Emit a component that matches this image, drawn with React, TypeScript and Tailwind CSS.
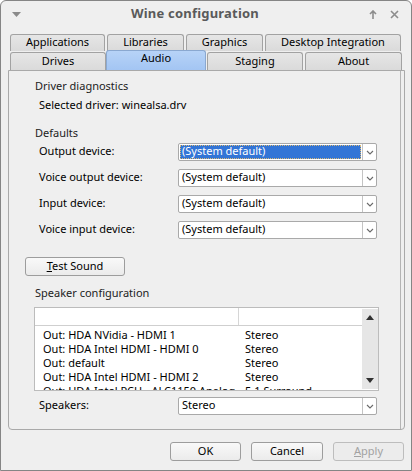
import React from 'react';

const Chevron = () => (
  <svg width="8" height="5" viewBox="0 0 8 5" fill="none">
    <path d="M1 1l3 3 3-3" stroke="#6b6b6b" strokeWidth="1.1" />
  </svg>
);

interface ComboProps {
  value: string;
  selected?: boolean;
}

const Combo: React.FC<ComboProps> = ({ value, selected }) => (
  <div className="flex w-[199px] h-[18px] bg-white border border-[#a9a9a9] rounded-[2px]">
    <div className="flex-1 p-[1px]">
      <div
        className={
          selected
            ? 'h-full flex items-center pl-[1px] pb-[1px] bg-[#3375d6] text-white border border-dotted border-[#d8b878]'
            : 'h-full flex items-center pl-[2px] pb-[1px] text-black'
        }
      >
        {value}
      </div>
    </div>
    <div className="w-[14px] flex items-center justify-center border-l border-[#c4c4c4]">
      <Chevron />
    </div>
  </div>
);

const Field: React.FC<{ label: string; value: string; selected?: boolean }> = ({ label, value, selected }) => (
  <div className="flex items-center pl-[30px] h-[18px]">
    <div className="w-[139px] pb-[1px]">{label}</div>
    <Combo value={value} selected={selected} />
  </div>
);

const Tab: React.FC<{ label: string; w: string; active?: boolean; ml?: string }> = ({ label, w, active, ml }) => (
  <div
    className={`${w} ${ml ?? ''} flex items-center justify-center border border-b-0 rounded-t-[3px] ${
      active
        ? 'h-[20px] relative z-10 bg-gradient-to-b from-[#b7d3f7] to-[#a3c5f3] border-[#8aa8d0] pb-[4px]'
        : 'h-full pb-[1px] bg-gradient-to-b from-[#e6e6e6] to-[#dadada] border-[#a2a2a2]'
    }`}
  >
    {label}
  </div>
);

const Button: React.FC<{ children: React.ReactNode; disabled?: boolean; w?: string }> = ({ children, disabled, w }) => (
  <div
    className={`${w ?? 'w-[71px]'} h-[19px] pb-[1px] flex items-center justify-center rounded-[3px] border ${
      disabled
        ? 'border-[#bdbdbd] text-[#a2a2a2] bg-[#ececec]'
        : 'border-[#9d9d9d] bg-gradient-to-b from-[#f9f9f9] to-[#ebebeb] text-black'
    }`}
  >
    {children}
  </div>
);

const rows = [
  ['Out: HDA NVidia - HDMI 1', 'Stereo'],
  ['Out: HDA Intel HDMI - HDMI 0', 'Stereo'],
  ['Out: default', 'Stereo'],
  ['Out: HDA Intel HDMI - HDMI 2', 'Stereo'],
  ['Out: HDA Intel PCH - ALC1150 Analog', '5.1 Surround'],
];

export default function App() {
  return (
    <div className="w-[412px] h-[471px] flex flex-col bg-[#efefef] border border-[#858585] rounded-t-[6px] overflow-hidden font-['Noto_Sans',sans-serif] text-[11px] text-black">
      {/* Title bar */}
      <div className="h-[26px] shrink-0 flex items-center px-[10px] relative">
        <svg width="9" height="5" viewBox="0 0 9 5" className="ml-[1px] mt-[1px]">
          <path d="M0 0h9L4.5 5z" fill="#8a8a8a" />
        </svg>
        <div className="flex-1 text-center font-bold text-[13px] text-[#5a5a5a] tracking-[0.2px]">Wine configuration</div>
        <div className="flex items-center gap-[13px] mr-[2px] text-[#8c8c8c]">
          <svg width="8" height="9" viewBox="0 0 8 9">
            <path d="M4 1v8M1 4l3-3 3 3" stroke="#8c8c8c" strokeWidth="1.6" fill="none" />
          </svg>
          <svg width="9" height="9" viewBox="0 0 9 9">
            <path d="M1 1l7 7M8 1l-7 7" stroke="#8c8c8c" strokeWidth="1.6" />
          </svg>
        </div>
      </div>

      {/* Tabs */}
      <div className="mt-[7px] pl-[9px] shrink-0">
        <div className="flex h-[17px] gap-[2px]">
          <Tab label="Applications" w="w-[95px]" />
          <Tab label="Libraries" w="w-[77px]" />
          <Tab label="Graphics" w="w-[77px]" />
          <Tab label="Desktop Integration" w="w-[136px]" />
        </div>
        <div className="flex h-[18px] mt-[1px] items-end">
          <Tab label="Drives" w="w-[96px]" />
          <Tab label="Audio" w="w-[100px]" active />
          <Tab label="Staging" w="w-[96px]" ml="ml-[1px]" />
          <Tab label="About" w="w-[97px]" ml="ml-[2px]" />
        </div>
      </div>

      {/* Page */}
      <div className="ml-[7px] w-[397px] h-[360px] shrink-0 border border-[#a9a9a9] rounded-b-[4px]">
        <div className="h-full mr-[3px] border-r border-[#b4b4b4] flex flex-col">
          <div className="mt-[7px] pl-[26px] leading-[15px] text-[#222]">Driver diagnostics</div>
          <div className="mt-[4px] pl-[30px] leading-[15px]">Selected driver: winealsa.drv</div>
          <div className="mt-[13px] pl-[26px] leading-[15px] text-[#222]">Defaults</div>
          <div className="mt-[3px] flex flex-col gap-[8px]">
            <Field label="Output device:" value="(System default)" selected />
            <Field label="Voice output device:" value="(System default)" />
            <Field label="Input device:" value="(System default)" />
            <Field label="Voice input device:" value="(System default)" />
          </div>
          <div className="mt-[18px] pl-[16px]">
            <Button w="w-[100px]">
              <span><span className="underline">T</span>est Sound</span>
            </Button>
          </div>
          <div className="mt-[9px] pl-[26px] leading-[15px] text-[#222]">Speaker configuration</div>
          <div className="mt-[7px] ml-[25px] w-[345px] h-[84px] border border-[#bcbcbc] bg-white flex overflow-hidden">
            <div className="flex-1 flex flex-col">
              <div className="h-[18px] shrink-0 flex border-b border-[#cfcfcf]">
                <div className="w-[204px] border-r border-[#d6d6d6]" />
                <div className="flex-1" />
              </div>
              <div className="pt-[2px] flex flex-col">
                {rows.map(([a, b]) => (
                  <div key={a} className="h-[14px] shrink-0 flex leading-[14px]">
                    <div className="w-[204px] pl-[8px] overflow-hidden whitespace-nowrap">{a}</div>
                    <div className="pl-[6px] whitespace-nowrap">{b}</div>
                  </div>
                ))}
              </div>
            </div>
            <div className="w-[16px] shrink-0 bg-[#e6e6e6] flex flex-col items-center justify-between py-[6px] my-[1px]">
              <svg width="8" height="5" viewBox="0 0 8 5">
                <path d="M0 5L4 0l4 5z" fill="#303030" />
              </svg>
              <svg width="8" height="5" viewBox="0 0 8 5">
                <path d="M0 0h8L4 5z" fill="#303030" />
              </svg>
            </div>
          </div>
          <div className="mt-[6px]">
            <Field label="Speakers:" value="Stereo" />
          </div>
        </div>
      </div>

      {/* Buttons */}
      <div className="mt-[12px] flex justify-end gap-[10px] pr-[7px]">
        <Button>OK</Button>
        <Button w="w-[72px]">Cancel</Button>
        <Button disabled>
          <span><span className="underline">A</span>pply</span>
        </Button>
      </div>
    </div>
  );
}
